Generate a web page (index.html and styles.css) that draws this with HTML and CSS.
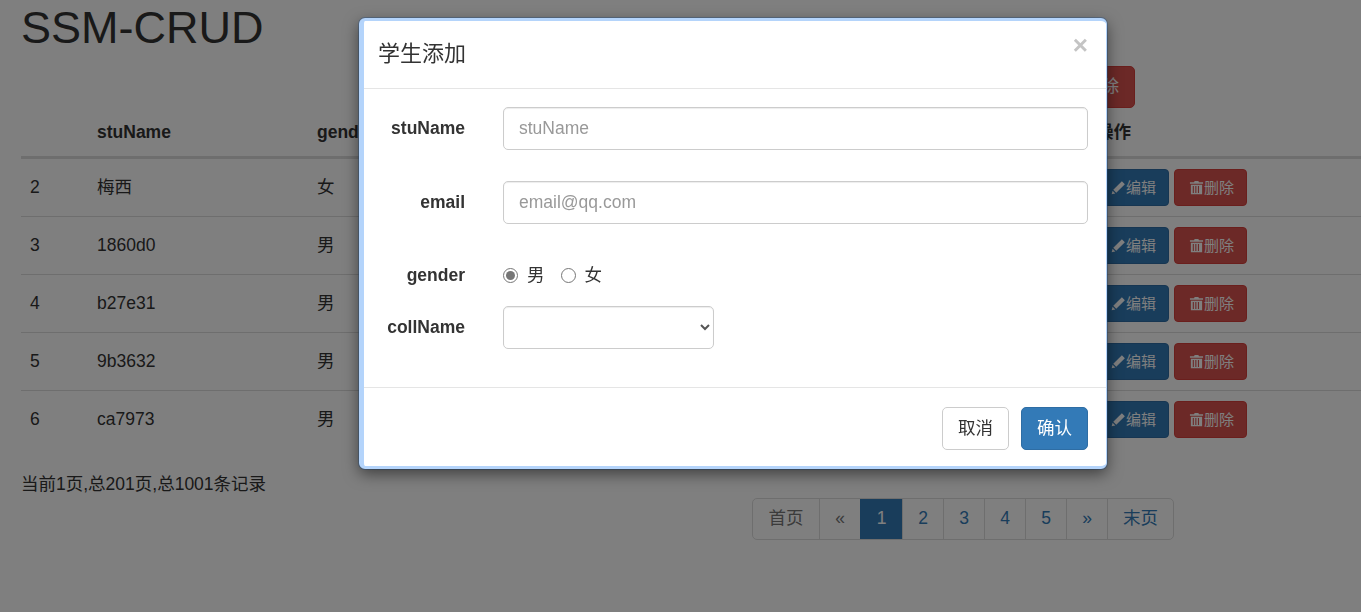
FILE: index.html
```html
<!DOCTYPE html>
<html lang="zh-CN">
<head>
<meta charset="utf-8">
<title>SSM-CRUD</title>
<link rel="stylesheet" href="styles.css">
</head>
<body>
<main class="page">
  <h1 class="title">SSM-CRUD</h1>
  <div class="toolbar"><button class="btn btn-danger">删除</button></div>
  <table class="grid">
    <colgroup><col class="c-id"><col class="c-name"><col class="c-gender"><col class="c-rest"><col class="c-ops"></colgroup>
    <thead><tr><th></th><th>stuName</th><th>gender</th><th></th><th>操作</th></tr></thead>
    <tbody>
      <tr><td>2</td><td>梅西</td><td>女</td><td></td><td><div class="ops">
        <button class="btn btn-sm btn-primary"><svg class="ico" viewBox="0 0 16 16"><path d="M11.6 1.2l3.2 3.2L5.6 13.6l-3.2-3.2zM1.7 11.4l2.9 2.9-3.9 1z"/></svg>编辑</button>
        <button class="btn btn-sm btn-danger"><svg class="ico" viewBox="0 0 16 16"><path d="M6 1h4l.6 1.4H15V4H1V2.4h4.4zM2 5h12v10.2H2zm2 1.4v7.4h1.2V6.400zm2.700 0v7.400h1.200V6.400zm2.800 0v7.400h1.200V6.400zm2 0v7.400"/></svg>删除</button></div></td></tr>
      <tr><td>3</td><td>1860d0</td><td>男</td><td></td><td><div class="ops">
        <button class="btn btn-sm btn-primary"><svg class="ico" viewBox="0 0 16 16"><path d="M11.6 1.2l3.2 3.2L5.6 13.6l-3.2-3.2zM1.7 11.4l2.9 2.9-3.9 1z"/></svg>编辑</button>
        <button class="btn btn-sm btn-danger"><svg class="ico" viewBox="0 0 16 16"><path d="M6 1h4l.6 1.4H15V4H1V2.4h4.4zM2 5h12v10.2H2zm2 1.4v7.4h1.2V6.400zm2.700 0v7.400h1.200V6.400zm2.800 0v7.400h1.200V6.400zm2 0v7.400"/></svg>删除</button></div></td></tr>
      <tr><td>4</td><td>b27e31</td><td>男</td><td></td><td><div class="ops">
        <button class="btn btn-sm btn-primary"><svg class="ico" viewBox="0 0 16 16"><path d="M11.6 1.2l3.2 3.2L5.6 13.6l-3.2-3.2zM1.7 11.4l2.9 2.9-3.9 1z"/></svg>编辑</button>
        <button class="btn btn-sm btn-danger"><svg class="ico" viewBox="0 0 16 16"><path d="M6 1h4l.6 1.4H15V4H1V2.4h4.4zM2 5h12v10.2H2zm2 1.4v7.4h1.2V6.400zm2.700 0v7.400h1.200V6.400zm2.800 0v7.400h1.200V6.400zm2 0v7.400"/></svg>删除</button></div></td></tr>
      <tr><td>5</td><td>9b3632</td><td>男</td><td></td><td><div class="ops">
        <button class="btn btn-sm btn-primary"><svg class="ico" viewBox="0 0 16 16"><path d="M11.6 1.2l3.2 3.2L5.6 13.6l-3.2-3.2zM1.7 11.4l2.9 2.9-3.9 1z"/></svg>编辑</button>
        <button class="btn btn-sm btn-danger"><svg class="ico" viewBox="0 0 16 16"><path d="M6 1h4l.6 1.4H15V4H1V2.4h4.4zM2 5h12v10.2H2zm2 1.4v7.4h1.2V6.400zm2.700 0v7.400h1.200V6.400zm2.800 0v7.400h1.200V6.400zm2 0v7.400"/></svg>删除</button></div></td></tr>
      <tr><td>6</td><td>ca7973</td><td>男</td><td></td><td><div class="ops">
        <button class="btn btn-sm btn-primary"><svg class="ico" viewBox="0 0 16 16"><path d="M11.6 1.2l3.2 3.2L5.6 13.6l-3.2-3.2zM1.7 11.4l2.9 2.9-3.9 1z"/></svg>编辑</button>
        <button class="btn btn-sm btn-danger"><svg class="ico" viewBox="0 0 16 16"><path d="M6 1h4l.6 1.4H15V4H1V2.4h4.4zM2 5h12v10.2H2zm2 1.4v7.4h1.2V6.400zm2.700 0v7.400h1.200V6.400zm2.800 0v7.400h1.200V6.400zm2 0v7.400"/></svg>删除</button></div></td></tr>
    </tbody>
  </table>
  <div class="foot">
    <p class="info">当前1页,总201页,总1001条记录</p>
    <nav class="pager">
      <a class="pg pg-wide pg-muted">首页</a>
      <a class="pg pg-muted">«</a>
      <a class="pg pg-active">1</a>
      <a class="pg">2</a>
      <a class="pg">3</a>
      <a class="pg">4</a>
      <a class="pg">5</a>
      <a class="pg">»</a>
      <a class="pg pg-wide">末页</a>
    </nav>
  </div>
</main>

<div class="backdrop"></div>

<section class="modal">
  <header class="modal-head">
    <h4 class="modal-title">学生添加</h4>
    <span class="close">×</span>
  </header>
  <form class="modal-body">
    <div class="row row-1">
      <label class="lab">stuName</label>
      <input class="field field-full" type="text" placeholder="stuName">
    </div>
    <div class="row row-2">
      <label class="lab">email</label>
      <input class="field field-full" type="text" placeholder="email@qq.com">
    </div>
    <div class="row row-3">
      <label class="lab">gender</label>
      <div class="radios">
        <label class="radio"><input type="radio" name="g" checked>男</label>
        <label class="radio"><input type="radio" name="g">女</label>
      </div>
    </div>
    <div class="row row-4">
      <label class="lab">collName</label>
      <select class="field field-select"><option></option></select>
    </div>
  </form>
  <footer class="modal-foot">
    <button class="btn btn-lg btn-default">取消</button>
    <button class="btn btn-lg btn-primary">确认</button>
  </footer>
</section>
</body>
</html>
```
FILE: styles.css
```css
* { box-sizing: border-box; }
html, body { height: 100%; }
body {
  margin: 0;
  overflow: hidden;
  background: #fff;
  color: #333;
  font: 17.5px/1.43 "Liberation Sans", "Noto Sans CJK SC", sans-serif;
}
button, input, select { font: inherit; }

.page { padding: 3px 0 0 21px; }
.title { margin: 0; font-size: 45px; font-weight: 400; line-height: 50px; }
.toolbar {
  display: flex;
  justify-content: flex-end;
  height: 42px;
  margin-top: 13px;
  padding-right: 226px;
}

.btn {
  height: 42px;
  padding: 0 15px;
  border: 1px solid transparent;
  border-radius: 5px;
  white-space: nowrap;
}
.btn-sm {
  display: inline-flex;
  align-items: center;
  width: 73px;
  height: 37px;
  padding: 0 0 0 14px;
  border-radius: 4px;
  font-size: 15px;
}
.btn-lg { width: 67px; height: 43px; padding: 0; }
.btn-primary { background: #337ab7; border-color: #2e6da4; color: #fff; }
.btn-danger { background: #d9534f; border-color: #d43f3a; color: #fff; }
.btn-default { background: #fff; border-color: #ccc; color: #333; }
.ico { width: 15px; height: 15px; fill: currentColor; flex: none; }

.grid { width: 1340px; table-layout: fixed; border-collapse: separate; border-spacing: 0; }
.c-id { width: 67px; }
.c-name { width: 220px; }
.c-gender { width: 250px; }
.c-ops { width: 274px; }
.grid th, .grid td { padding: 0 0 0 9px; text-align: left; vertical-align: middle; }
.grid th { height: 51px; border-bottom: 3px solid #ddd; padding-top: 1px; font-weight: 700; }
.grid td { height: 58px; border-top: 1px solid #ddd; }
.grid tbody tr:first-child td { height: 57px; border-top: 0; }
.ops { display: flex; gap: 5px; }

.foot { display: flex; align-items: flex-start; }
.info { width: 731px; margin: 24px 0 0; font-size: 17.5px; line-height: 25px; }
.pager {
  display: flex;
  height: 42px;
  margin-top: 50px;
  border: 1px solid #ddd;
  border-radius: 5px;
  overflow: hidden;
  background: #fff;
}
.pg {
  display: flex;
  align-items: center;
  justify-content: center;
  width: 41px;
  border-left: 1px solid #ddd;
  color: #337ab7;
}
.pg:first-child { border-left: 0; }
.pg-wide { width: 66px; }
.pg-muted { color: #777; }
.pg-active { background: #337ab7; border-color: #337ab7; color: #fff; width: 42px; }

.backdrop { position: fixed; inset: 0; background: rgba(0, 0, 0, .5); }

.modal {
  position: absolute;
  left: 359px;
  top: 18px;
  width: 748px;
  height: 451px;
  background: #fff;
  border-style: solid;
  border-width: 3px 1px 3px 5px;
  border-color: #b4d4fb;
  border-radius: 6px;
  box-shadow: 0 5px 15px rgba(0, 0, 0, .5), 0 0 0 1px rgba(50, 90, 140, .45);
}
.modal-head {
  position: relative;
  height: 68px;
  padding: 17px 14px 0;
  border-bottom: 1px solid #e5e5e5;
}
.modal-title { margin: 0; font-size: 22px; font-weight: 400; line-height: 31px; }
.close {
  position: absolute;
  right: 18px;
  top: 6px;
  color: #c4c4c4;
  font-size: 26px;
  font-weight: 700;
  line-height: 36px;
}
.modal-body { height: 298px; padding: 18px 18px 0 0; }
.row { display: flex; align-items: center; }
.row-2 { margin-top: 31px; }
.row-3 { height: 42px; margin-top: 31px; }
.row-4 { margin-top: 9px; }
.lab { width: 101px; margin-right: 38px; text-align: right; font-weight: 700; flex: none; }
.field {
  height: 43px;
  background: #fff;
  border: 1px solid #ccc;
  border-radius: 5px;
  box-shadow: inset 0 1px 1px rgba(0, 0, 0, .075);
  color: #555;
}
.field-full { flex: 1; min-width: 0; padding: 0 15px; }
.field-full::placeholder { color: #999; opacity: 1; }
.field-select { width: 211px; padding: 0 10px; }
.radios { display: flex; gap: 16px; }
.radio { display: flex; align-items: center; gap: 9px; }
.radio input { width: 15px; height: 15px; margin: 0; accent-color: #767676; }
.modal-foot {
  display: flex;
  justify-content: flex-end;
  gap: 12px;
  padding: 19px 18px 0 0;
  border-top: 1px solid #e5e5e5;
}
```
